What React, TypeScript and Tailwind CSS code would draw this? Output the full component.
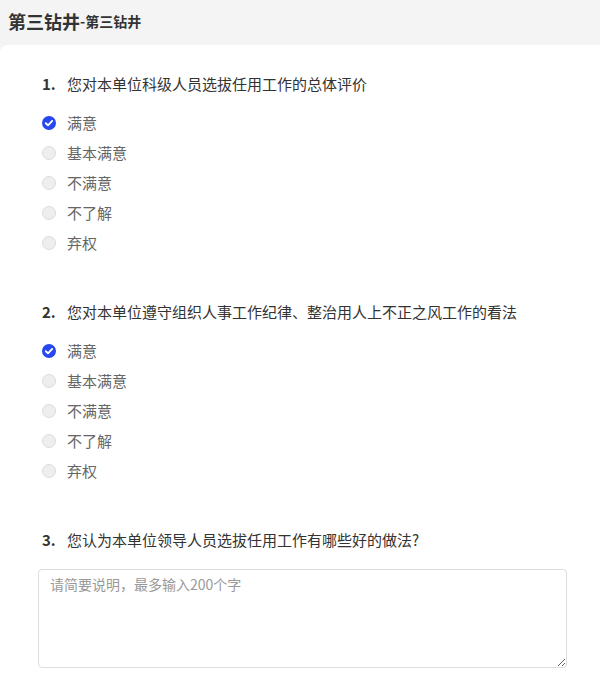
import React from "react";

const options = ["满意", "基本满意", "不满意", "不了解", "弃权"];

const questions = [
  { no: "1.", title: "您对本单位科级人员选拔任用工作的总体评价" },
  { no: "2.", title: "您对本单位遵守组织人事工作纪律、整治用人上不正之风工作的看法" },
];

function Radio({ checked }: { checked: boolean }) {
  if (checked) {
    return (
      <span className="flex size-[14px] shrink-0 items-center justify-center rounded-full bg-[#2747f0]">
        <svg viewBox="0 0 14 14" className="size-[14px]">
          <path d="M3.8 7.2 L6 9.3 L10.2 4.9" fill="none" stroke="#fff" strokeWidth="1.9" strokeLinecap="round" strokeLinejoin="round" />
        </svg>
      </span>
    );
  }
  return <span className="size-[14px] shrink-0 rounded-full border border-[#dcdcdc] bg-[#eeeeee]" />;
}

function ChoiceQuestion({ no, title }: { no: string; title: string }) {
  return (
    <div>
      <div className="flex h-5 items-center text-[15px] text-[#333]">
        <span className="w-[25px] font-bold">{no}</span>
        <span>{title}</span>
      </div>
      <div className="mt-[14px]">
        {options.map((o, i) => (
          <div key={o} className="flex h-[30px] items-center">
            <Radio checked={i === 0} />
            <span className="ml-[11px] text-[15px] text-[#666]">{o}</span>
          </div>
        ))}
      </div>
    </div>
  );
}

export default function App() {
  return (
    <div
      className="min-h-[698px] bg-[#f4f4f4]"
      style={{ fontFamily: '"Noto Sans CJK SC", "Noto Sans", sans-serif' }}
    >
      <div className="flex h-[45px] items-center px-2 pb-[2px] text-[#333]">
        <span className="text-[18px] font-bold">第三钻井</span>
        <span className="text-[14px] font-bold">-第三钻井</span>
      </div>
      <div className="min-h-[653px] rounded-tl-lg bg-white pl-[42px] pr-[33px] pt-[29px]">
        <div className="flex flex-col gap-[44px]">
          {questions.map((q) => (
            <ChoiceQuestion key={q.no} no={q.no} title={q.title} />
          ))}
          <div>
            <div className="flex h-5 items-center text-[15px] text-[#333]">
              <span className="w-[25px] font-bold">3.</span>
              <span>您认为本单位领导人员选拔任用工作有哪些好的做法?</span>
            </div>
            <textarea
              placeholder="请简要说明，最多输入200个字"
              className="-ml-1 mt-[19px] block h-[99px] w-[529px] rounded border border-[#dddddd] px-[11px] pb-2 pt-1 text-[14px] text-[#333] placeholder:text-[#999] outline-none"
            />
          </div>
        </div>
      </div>
    </div>
  );
}
